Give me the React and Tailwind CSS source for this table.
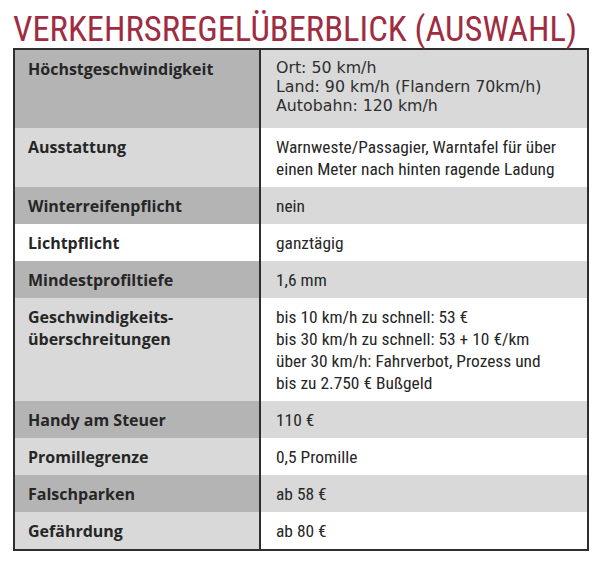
// Übersichtstabelle: Verkehrsregeln (Auswahl)
const DARK = "bg-[#b4b4b4]";
const LIGHT = "bg-[#d9d9d9]";
const WHITE = "bg-white";

const rows = [
  {
    label: "Höchstgeschwindigkeit",
    value: ["Ort: 50 km/h", "Land: 90 km/h (Flandern 70km/h)", "Autobahn: 120 km/h"],
    left: DARK,
    right: LIGHT,
    wide: true,
  },
  {
    label: "Ausstattung",
    value: ["Warnweste/Passagier, Warntafel für über", "einen Meter nach hinten ragende Ladung"],
    left: LIGHT,
    right: WHITE,
  },
  { label: "Winterreifenpflicht", value: ["nein"], left: DARK, right: LIGHT },
  { label: "Lichtpflicht", value: ["ganztägig"], left: WHITE, right: WHITE },
  { label: "Mindestprofiltiefe", value: ["1,6 mm"], left: DARK, right: LIGHT },
  {
    label: ["Geschwindigkeits-", "überschreitungen"],
    value: [
      "bis 10 km/h zu schnell: 53 €",
      "bis 30 km/h zu schnell: 53 + 10 €/km",
      "über 30 km/h: Fahrverbot, Prozess und",
      "bis zu 2.750 € Bußgeld",
    ],
    left: LIGHT,
    right: WHITE,
  },
  { label: "Handy am Steuer", value: ["110 €"], left: DARK, right: LIGHT },
  { label: "Promillegrenze", value: ["0,5 Promille"], left: LIGHT, right: WHITE },
  { label: "Falschparken", value: ["ab 58 €"], left: DARK, right: LIGHT },
  { label: "Gefährdung", value: ["ab 80 €"], left: LIGHT, right: WHITE },
];

const Lines = ({ items }) =>
  (Array.isArray(items) ? items : [items]).map((t, i) => <div key={i}>{t}</div>);

export default function App() {
  return (
    <div className="min-h-[567px] bg-white pl-[13px] pt-[10px]">
      {/* Titel */}
      <h1 className="font-['Roboto_Condensed',sans-serif] text-[34.6px] leading-[38px] font-normal text-[#9f2d42] whitespace-nowrap">
        VERKEHRSREGELÜBERBLICK (AUSWAHL)
      </h1>

      {/* Tabelle */}
      <div className="grid w-[576px] grid-cols-[246px_1fr] border-2 border-[#2e2e2e] text-[#262626]">
        {rows.map((r, i) => (
          <div key={i} className="contents">
            <div
              className={`${r.left} border-r-2 border-[#2e2e2e] pl-[13px] pr-2 py-[7.5px] font-['Open_Sans',sans-serif] text-[16px] font-bold leading-[22px]`}
            >
              <Lines items={r.label} />
            </div>
            <div
              className={`${r.right} pl-[15px] pr-2 whitespace-nowrap ${
                r.wide
                  ? "pt-[8px] pb-[13px] font-['DejaVu_Sans',sans-serif] text-[15.8px] leading-[19px] text-[#2e2e2e]"
                  : "py-[7.5px] font-['Roboto_Condensed',sans-serif] text-[17.4px] leading-[22px]"
              }`}
            >
              <Lines items={r.value} />
            </div>
          </div>
        ))}
      </div>
    </div>
  );
}
